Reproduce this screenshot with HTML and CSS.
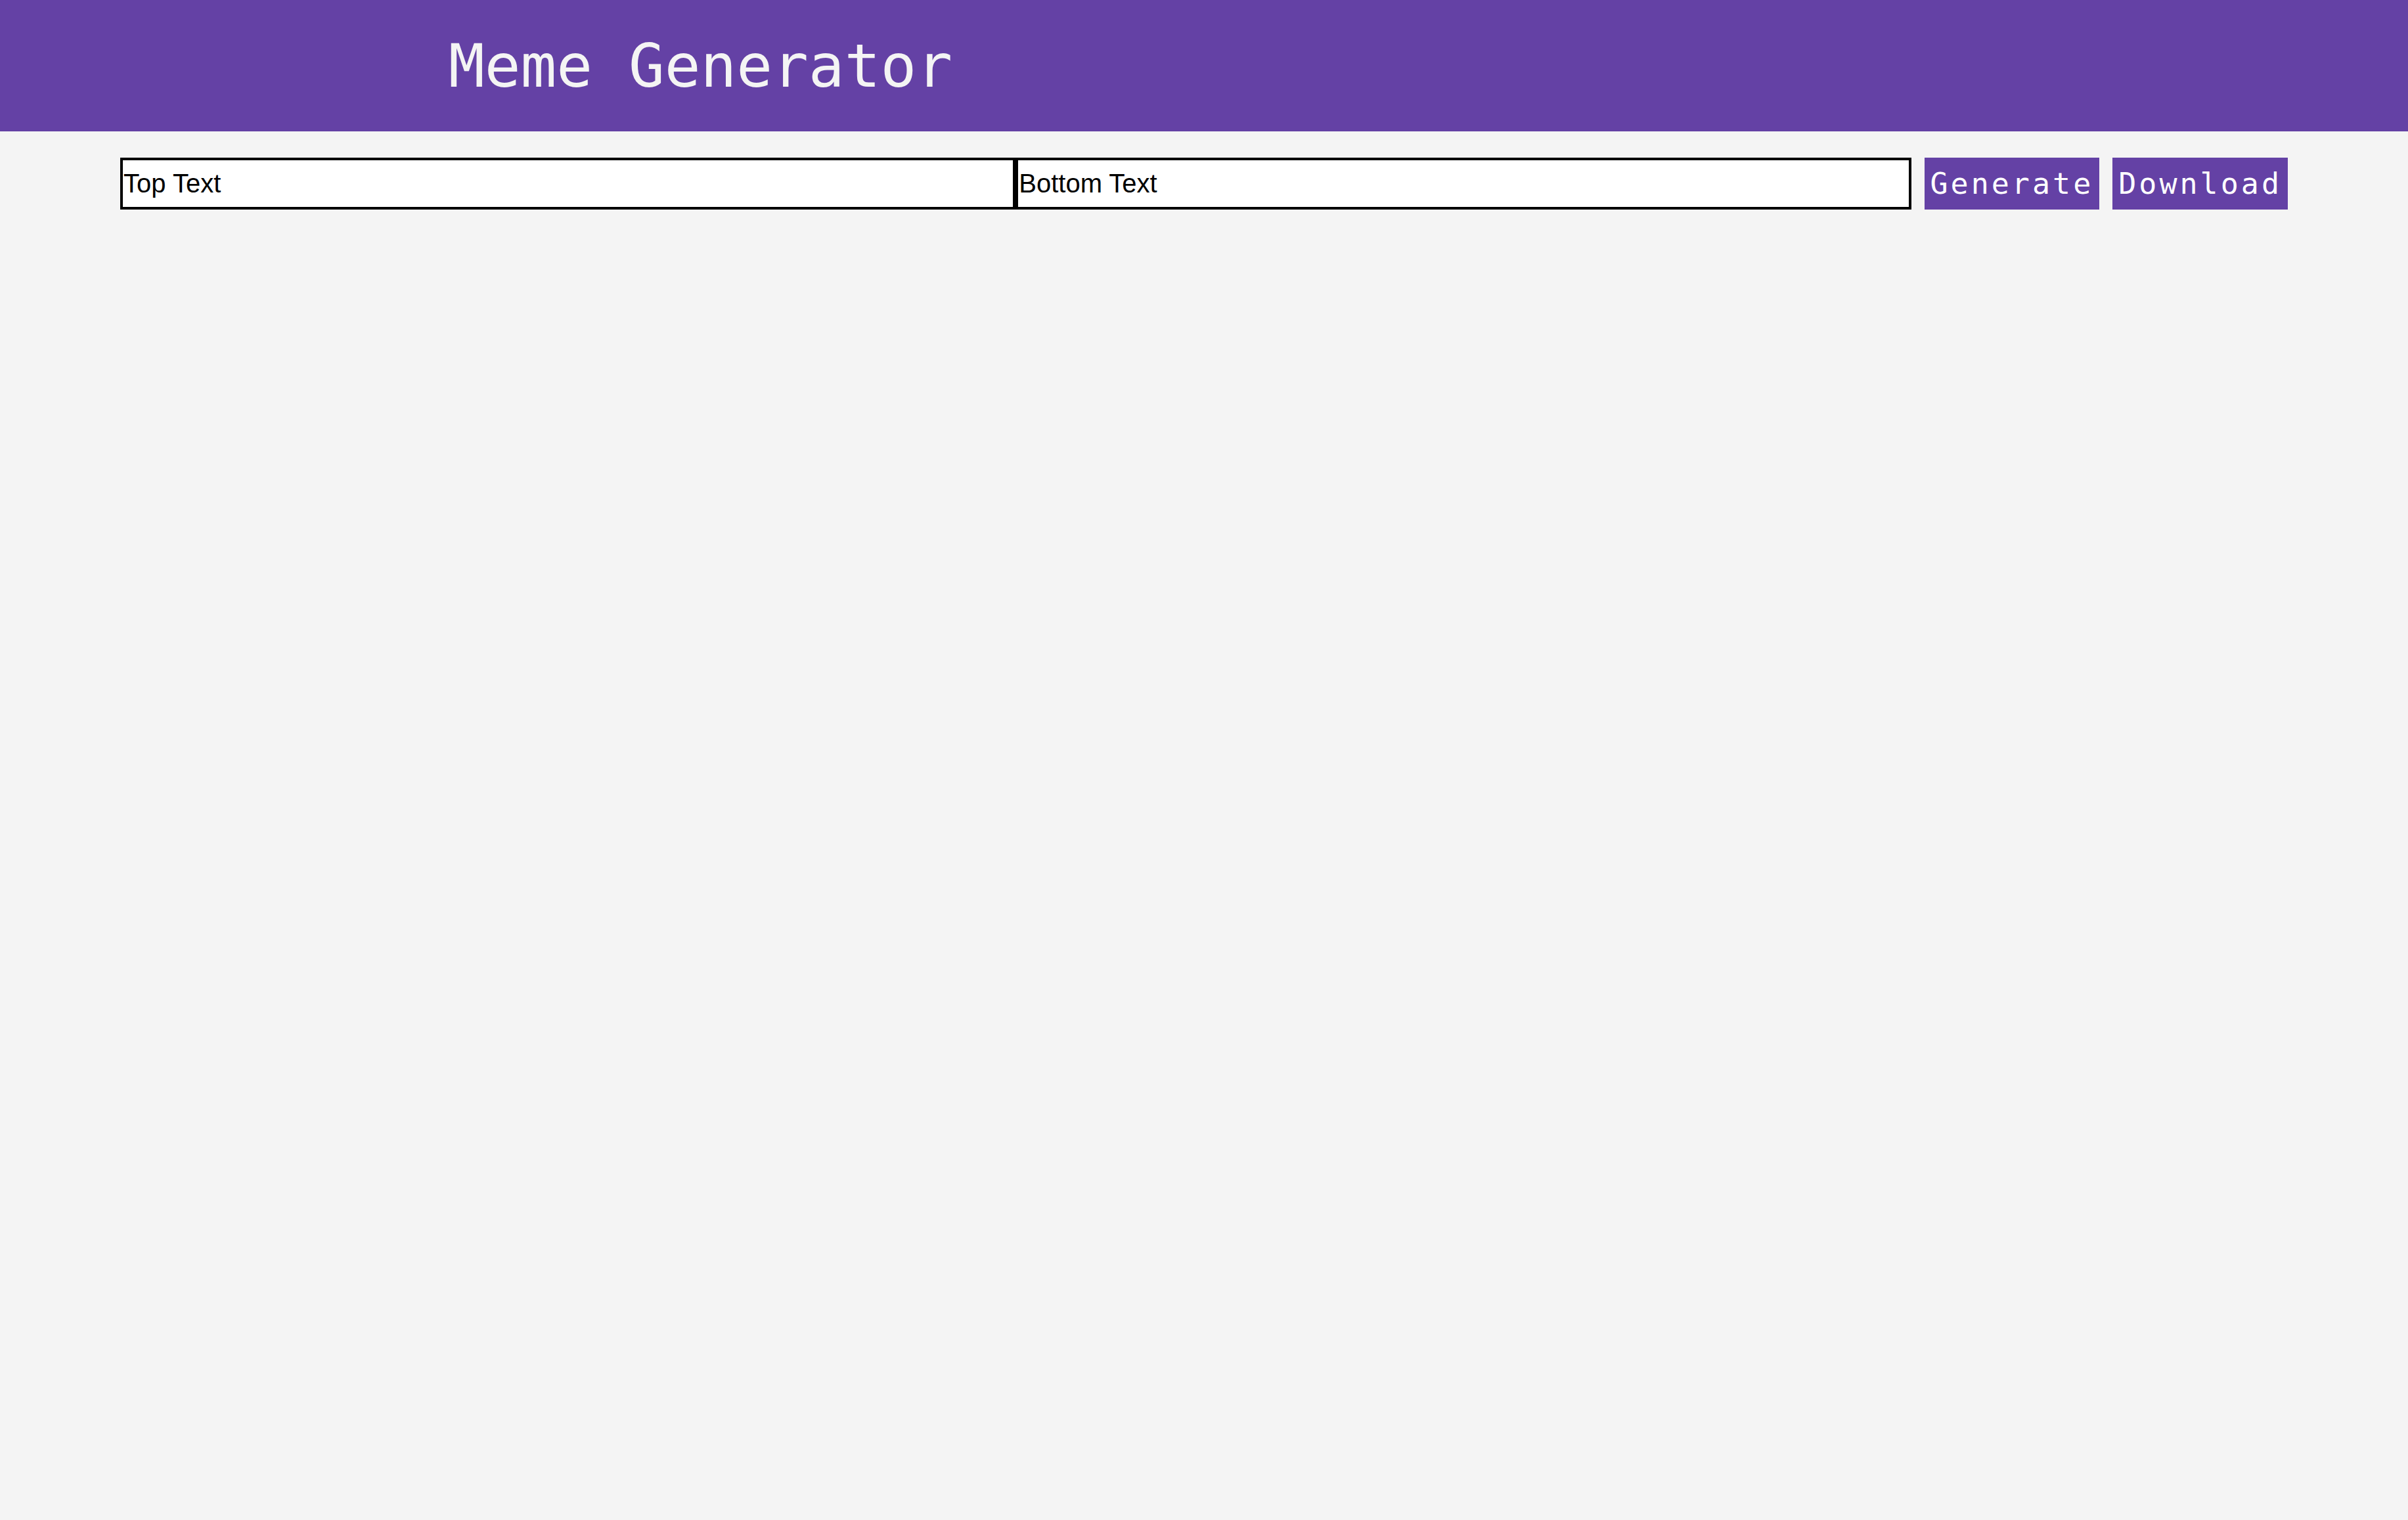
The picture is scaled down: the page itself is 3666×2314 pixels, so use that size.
FILE: index.html
```html
<!DOCTYPE html>
<html lang="en">
<head>
<meta charset="utf-8">
<title>Meme Generator</title>
<link rel="stylesheet" href="styles.css">
</head>
<body>
<header class="header">
  <h1 class="title">Meme Generator</h1>
</header>
<main class="main">
  <form class="meme-form">
    <div class="inputs">
      <input class="text-input" type="text" value="Top Text">
      <input class="text-input" type="text" value="Bottom Text">
    </div>
    <button type="button" class="btn">Generate</button>
    <button type="button" class="btn">Download</button>
  </form>
</main>
</body>
</html>
```

FILE: styles.css
```css
html, body {
  margin: 0;
  padding: 0;
  background: #f4f4f4;
  min-height: 100%;
}

.header {
  height: 200px;
  background: #6441a5;
  display: flex;
  align-items: center;
  padding-left: 683px;
  box-sizing: border-box;
}

.title {
  margin: 0;
  font-family: "DejaVu Sans Mono", monospace;
  font-weight: normal;
  font-size: 91px;
  color: #f4f4f4;
  line-height: 1;
}

.main {
  padding-top: 40px;
}

.meme-form {
  width: 3300px;
  margin: 0 auto;
  display: flex;
  align-items: stretch;
  gap: 20px;
}

.inputs {
  flex: 1;
  display: flex;
}

.text-input {
  flex: 1;
  min-width: 0;
  height: 79px;
  box-sizing: border-box;
  border: 4px solid #000;
  padding: 0 1px;
  margin: 0;
  background: #fff;
  font-family: "Liberation Sans", Arial, sans-serif;
  font-size: 40px;
  color: #000;
  outline: none;
}

.btn {
  height: 79px;
  box-sizing: border-box;
  border: none;
  margin: 0;
  padding: 0 9px;
  background: #6441a5;
  color: #fff;
  font-family: "DejaVu Sans Mono", monospace;
  font-size: 45px;
  letter-spacing: 4px;
  cursor: pointer;
}
```
